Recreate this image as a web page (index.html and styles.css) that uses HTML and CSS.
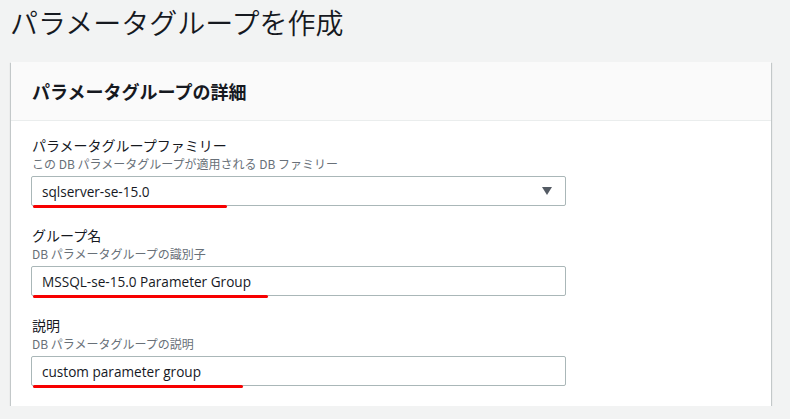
FILE: index.html
```html
<!DOCTYPE html>
<html lang="ja">

<head>
    <meta charset="UTF-8">
    <title>パラメータグループを作成</title>
    <link rel="stylesheet" href="styles.css">
</head>

<body>
    <h1 class="page-title">パラメータグループを作成</h1>

    <div class="panel">
        <div class="panel-header">
            <h2>パラメータグループの詳細</h2>
        </div>
        <div class="panel-body">
            <div class="field">
                <label class="field-label">パラメータグループファミリー</label>
                <div class="field-desc">この DB パラメータグループが適用される DB ファミリー</div>
                <div class="control">
                    <div class="select">
                        <span>sqlserver-se-15.0</span>
                        <svg class="caret" width="10" height="8" viewBox="0 0 10 8">
                            <path d="M0 0 H10 L5 8 Z" fill="#545b64" />
                        </svg>
                    </div>
                    <span class="mark mark-family"></span>
                </div>
            </div>

            <div class="field">
                <label class="field-label">グループ名</label>
                <div class="field-desc">DB パラメータグループの識別子</div>
                <div class="control">
                    <input class="text-input" type="text" value="MSSQL-se-15.0 Parameter Group">
                    <span class="mark mark-name"></span>
                </div>
            </div>

            <div class="field">
                <label class="field-label">説明</label>
                <div class="field-desc">DB パラメータグループの説明</div>
                <div class="control">
                    <input class="text-input" type="text" value="custom parameter group">
                    <span class="mark mark-desc"></span>
                </div>
            </div>
        </div>
    </div>
</body>

</html>
```

FILE: styles.css
```css
body {
    margin: 0;
    background-color: #f2f3f3;
    font-family: "Open Sans", "Noto Sans CJK JP", sans-serif;
    color: #16191f;
}

.page-title {
    margin: 0;
    padding: 4px 0 0 10px;
    height: 58px;
    box-sizing: border-box;
    font-size: 28px;
    font-weight: 350;
    line-height: 36px;
    font-family: "Noto Sans CJK JP", sans-serif;
}

.panel {
    margin-left: 11px;
    width: 760px;
    background: #fff;
    box-shadow: 0 1px 1px 0 rgba(0, 28, 36, 0.3), 1px 1px 1px 0 rgba(0, 28, 36, 0.15), -1px 1px 1px 0 rgba(0, 28, 36, 0.15);
    margin-top: 4px;
}

.panel-header {
    height: 58px;
    background: #fafafa;
    border-bottom: 1px solid #eaeded;
    padding-left: 21px;
    display: flex;
    align-items: center;
}

.panel-header h2 {
    margin: 0;
    font-size: 18px;
    font-weight: bold;
    font-family: "Noto Sans CJK JP", sans-serif;
}

.panel-body {
    padding: 13px 20px 20px 20px;
}

.field + .field {
    margin-top: 18px;
}

.field-label {
    display: block;
    font-size: 14px;
    line-height: 22px;
    font-family: "Noto Sans CJK JP", sans-serif;
    padding-left: 1px;
}

.field-desc {
    font-size: 12px;
    line-height: 16px;
    color: #687078;
    font-family: "Noto Sans CJK JP", sans-serif;
    padding-left: 1px;
    margin-bottom: 4px;
}

.control {
    position: relative;
    width: 535px;
}

.select,
.text-input {
    box-sizing: border-box;
    width: 535px;
    height: 30px;
    border: 1px solid #aab7b8;
    border-radius: 2px;
    background: #fff;
    padding: 0 10px;
    font-family: "Open Sans", sans-serif;
    font-size: 13.6px;
    color: #16191f;
}

.select {
    display: flex;
    align-items: center;
    justify-content: space-between;
    padding-right: 13px;
}

.text-input {
    display: block;
    outline: none;
}

.mark {
    position: absolute;
    left: 2px;
    top: 29px;
    height: 3px;
    border-radius: 2px;
    background: #f70000;
}

.mark-family {
    width: 194px;
}

.mark-name {
    width: 235px;
}

.mark-desc {
    width: 210px;
}
```
